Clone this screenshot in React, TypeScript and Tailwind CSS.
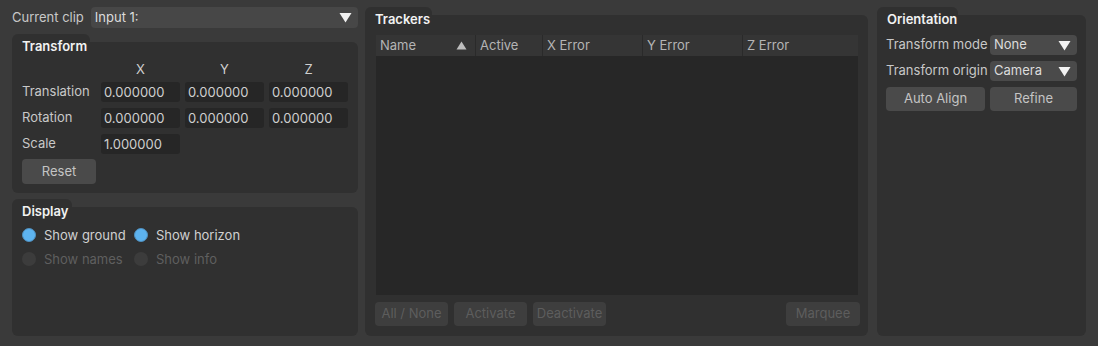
import React from 'react';

const font = { fontFamily: 'Inter, "Noto Sans", sans-serif' };

const Caret: React.FC = () => (
  <svg width="13" height="11" viewBox="0 0 13 11" className="shrink-0">
    <path d="M0.5 1 L12.5 1 L6.5 10.5 Z" fill="#f2f2f2" />
  </svg>
);

const Group: React.FC<{ title: string; tabW: string; className?: string; children?: React.ReactNode }> = ({
  title,
  tabW,
  className = '',
  children,
}) => (
  <div className={`flex flex-col ${className}`}>
    <div className={`h-[8px] ${tabW} rounded-t-[6px] bg-[#303030]`} />
    <div className="flex-1 flex flex-col rounded-[6px] rounded-tl-none bg-[#303030]">
      <div className="-mt-[4px] h-[16px] leading-[16px] px-[10px] text-[13px] font-semibold text-[#f2f2f2]">
        {title}
      </div>
      {children}
    </div>
  </div>
);

const Field: React.FC<{ value: string }> = ({ value }) => (
  <div className="h-[20px] w-[79px] rounded-[3px] bg-[#262626] px-[3px] text-[13px] leading-[20px] text-[#cfcfcf]">
    {value}
  </div>
);

const Radio: React.FC<{ label: string; on?: boolean }> = ({ label, on }) => (
  <div className="flex items-center gap-[8px] h-[16px]">
    <span
      className={`h-[14px] w-[14px] rounded-full ${on ? 'bg-[#5db3ef] border border-[#4f8fbd]' : 'bg-[#3c3c3c]'}`}
    />
    <span className={`text-[13px] leading-[16px] ${on ? 'text-[#d0d0d0]' : 'text-[#5f5f5f]'}`}>{label}</span>
  </div>
);

const Btn: React.FC<{ label: string; w: string; disabled?: boolean }> = ({ label, w, disabled }) => (
  <div
    className={`${w} h-[24px] rounded-[4px] flex items-center justify-center text-[13px] ${
      disabled ? 'bg-[#3e3e3e] text-[#5d5d5d]' : 'bg-[#4a4a4a] text-[#c4c4c4]'
    }`}
  >
    {label}
  </div>
);

const Select: React.FC<{ value: string; className?: string }> = ({ value, className = '' }) => (
  <div
    className={`h-[20px] rounded-[4px] bg-[#4a4a4a] flex items-center justify-between pl-[4px] pr-[6px] text-[13px] text-[#dcdcdc] ${className}`}
  >
    <span>{value}</span>
    <Caret />
  </div>
);

export default function App() {
  const columns = [
    { name: 'Name', w: 'w-[100px]', sort: true },
    { name: 'Active', w: 'w-[67px]' },
    { name: 'X Error', w: 'w-[100px]' },
    { name: 'Y Error', w: 'w-[100px]' },
    { name: 'Z Error', w: 'flex-1' },
  ];

  return (
    <div style={font} className="w-[1098px] h-[346px] bg-[#3a3a3a] flex pl-[12px] pt-[7px] pb-[10px] gap-[7px] overflow-hidden">
      {/* Left column */}
      <div className="w-[346px] flex flex-col">
        <div className="flex items-center h-[21px] gap-[7px]">
          <span className="text-[13px] text-[#c8c8c8]">Current clip</span>
          <Select value="Input 1:" className="flex-1 h-[21px] bg-[#474747] text-[#c8c8c8] pr-[5px]" />
        </div>

        <Group title="Transform" tabW="w-[78px]" className="mt-[6px] h-[159px]">
          <div className="px-[10px] mt-[7px]">
            <div className="flex h-[16px] leading-[16px] text-[13px] text-[#cfcfcf]">
              <div className="w-[79px]" />
              <div className="w-[79px] text-center">X</div>
              <div className="w-[79px] ml-[5px] text-center">Y</div>
              <div className="w-[79px] ml-[5px] text-center">Z</div>
            </div>
            {[
              ['Translation', ['0.000000', '0.000000', '0.000000']],
              ['Rotation', ['0.000000', '0.000000', '0.000000']],
              ['Scale', ['1.000000']],
            ].map(([label, vals], i) => (
              <div key={i} className={`flex items-center gap-[5px] ${i === 0 ? 'mt-[5px]' : 'mt-[6px]'}`}>
                <div className="w-[74px] text-[13px] text-[#c8c8c8]">{label as string}</div>
                {(vals as string[]).map((v, j) => (
                  <Field key={j} value={v} />
                ))}
              </div>
            ))}
            <div className="mt-[5px]">
              <Btn label="Reset" w="w-[74px] h-[25px]" />
            </div>
          </div>
        </Group>

        <Group title="Display" tabW="w-[60px]" className="mt-[6px] flex-1">
          <div className="px-[10px] mt-[8px] grid grid-cols-[112px_auto] gap-y-[8px]">
            <Radio label="Show ground" on />
            <Radio label="Show horizon" on />
            <Radio label="Show names" />
            <Radio label="Show info" />
          </div>
        </Group>
      </div>

      {/* Trackers */}
      <Group title="Trackers" tabW="w-[67px]" className="w-[503px]">
        <div className="mx-[11px] mt-[8px] mr-[10px] flex-1 flex flex-col bg-[#272727]">
          <div className="flex h-[21px] bg-[#353535] text-[13px] text-[#b4b4b4]">
            {columns.map((c, i) => (
              <div
                key={c.name}
                className={`${c.w} flex items-center justify-between px-[4px] ${
                  i < columns.length - 1 ? 'border-r border-[#2a2a2a]' : ''
                }`}
              >
                <span>{c.name}</span>
                {c.sort && (
                  <svg width="11" height="9" viewBox="0 0 11 9" className="mr-[4px]">
                    <path d="M0.5 8.5 L10.5 8.5 L5.5 0.5 Z" fill="#bdbdbd" />
                  </svg>
                )}
              </div>
            ))}
          </div>
          <div className="flex-1" />
        </div>
        <div className="flex gap-[6px] px-[10px] pr-[8px] mt-[7px] mb-[10px]">
          <Btn label="All / None" w="w-[73px]" disabled />
          <Btn label="Activate" w="w-[73px]" disabled />
          <Btn label="Deactivate" w="w-[73px]" disabled />
          <div className="flex-1" />
          <Btn label="Marquee" w="w-[74px]" disabled />
        </div>
      </Group>

      {/* Orientation */}
      <Group title="Orientation" tabW="w-[81px]" className="ml-[2px] w-[209px]">
        <div className="px-[9px] mt-[8px] flex flex-col gap-[6px] text-[13px] text-[#c8c8c8]">
          <div className="flex items-center justify-between">
            <span>Transform mode</span>
            <Select value="None" className="w-[87px]" />
          </div>
          <div className="flex items-center justify-between">
            <span>Transform origin</span>
            <Select value="Camera" className="w-[87px]" />
          </div>
          <div className="flex gap-[5px]">
            <Btn label="Auto Align" w="w-[99px] h-[22px]" />
            <Btn label="Refine" w="w-[87px] h-[22px]" />
          </div>
        </div>
      </Group>
    </div>
  );
}
